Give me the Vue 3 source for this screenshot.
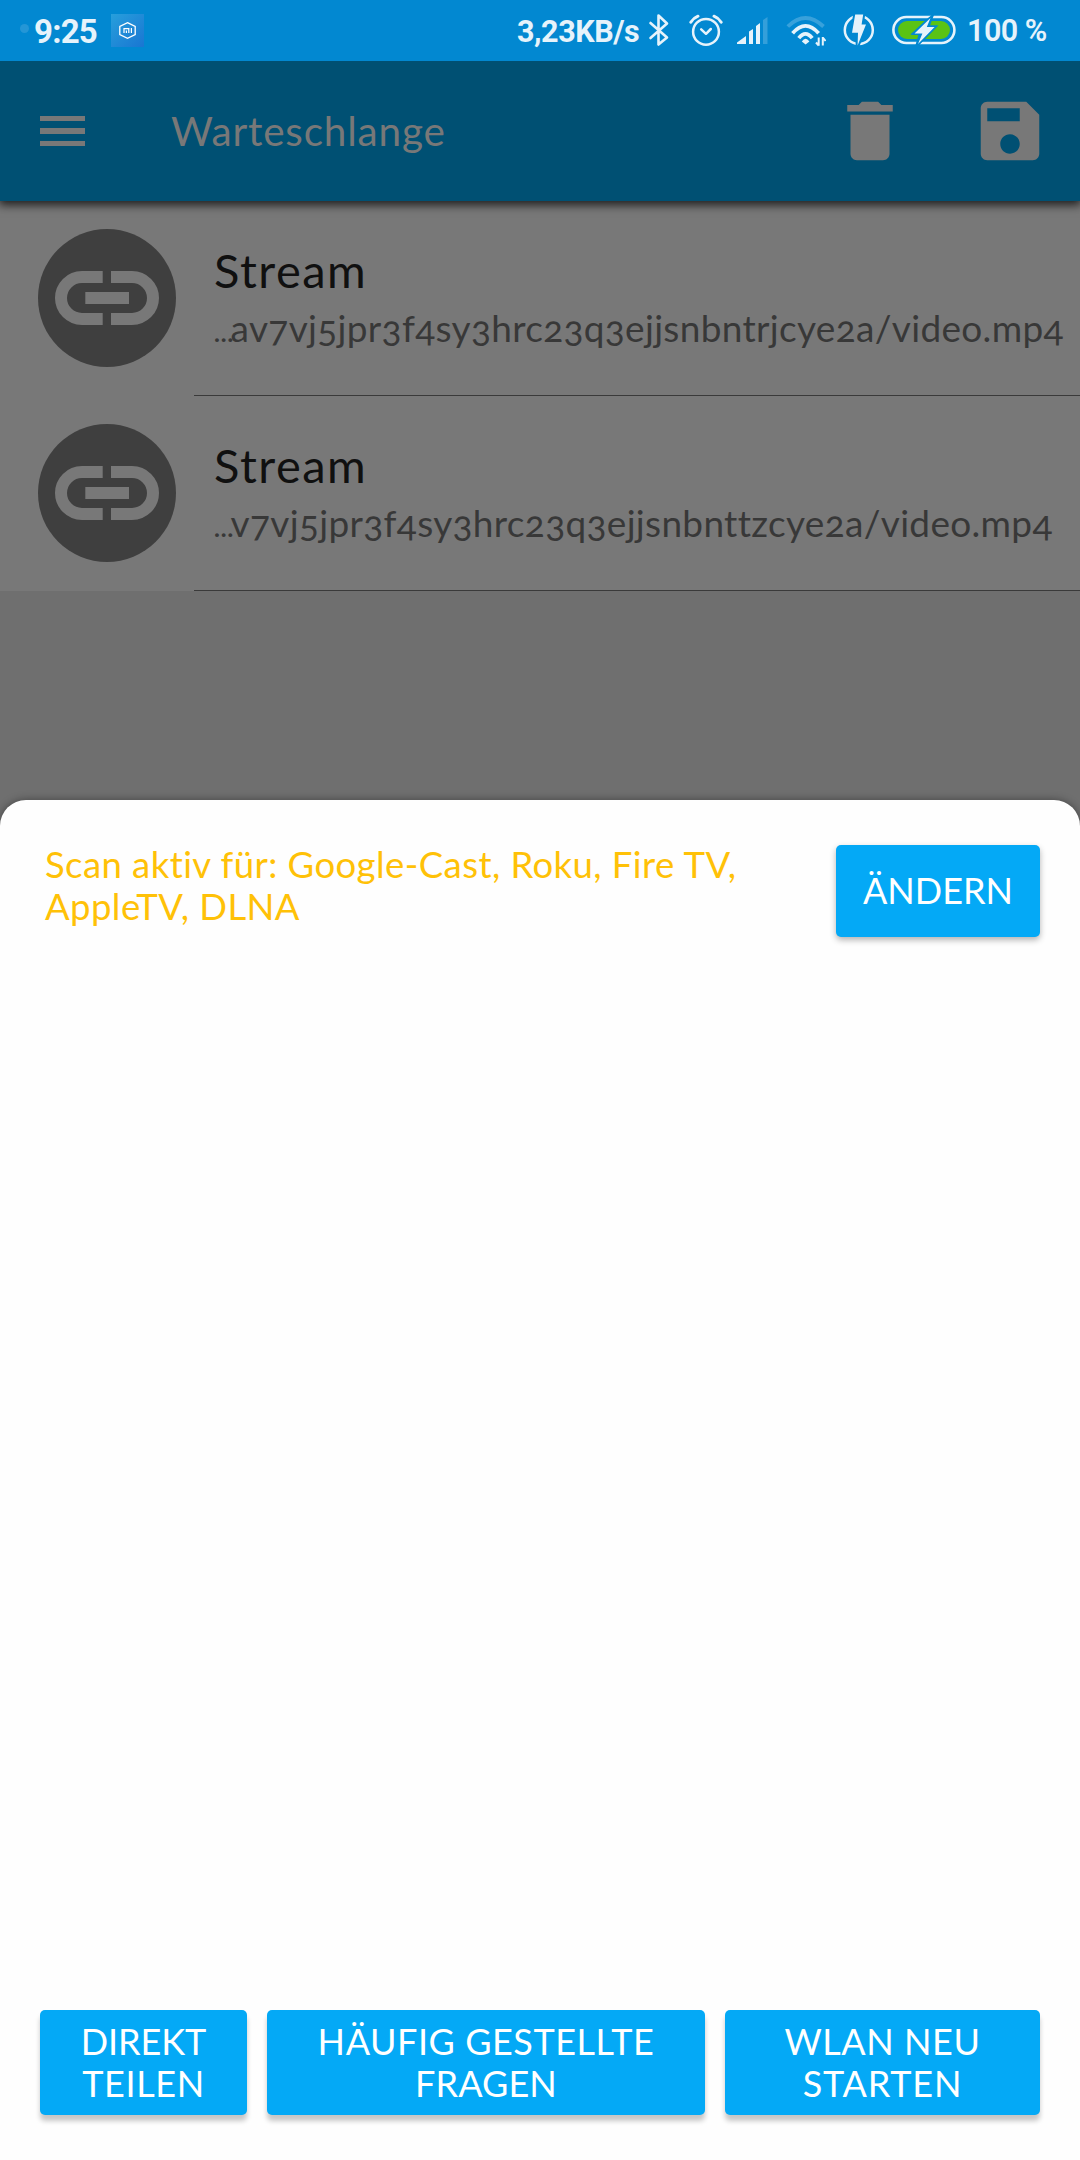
<script setup>
const queue = [
  { title: 'Stream', url: 'av7vj5jpr3f4sy3hrc23q3ejjsnbntrjcye2a/video.mp4' },
  { title: 'Stream', url: 'v7vj5jpr3f4sy3hrc23q3ejjsnbnttzcye2a/video.mp4' },
]
const actions = [
  { key: 'share', lines: ['DIREKT', 'TEILEN'] },
  { key: 'faq', lines: ['HÄUFIG GESTELLTE', 'FRAGEN'] },
  { key: 'restart', lines: ['WLAN NEU', 'STARTEN'] },
]
</script>

<template>
  <div class="screen">
    <div class="status">
      <i class="dot"></i>
      <span class="clock">9:25</span>
      <svg class="mi" width="33" height="33" viewBox="0 0 33 33">
        <defs>
          <linearGradient id="mi-bg" x1="0" y1="0" x2="1" y2="1">
            <stop offset="0" stop-color="#279fdc" />
            <stop offset="1" stop-color="#1976d2" />
          </linearGradient>
        </defs>
        <rect width="33" height="33" fill="url(#mi-bg)" />
        <path d="M16.5 8.6 24.2 12.4V20.6L16.5 24.4 8.8 20.6V12.4Z" fill="none" stroke="#fff" stroke-width="1.3" />
        <path d="M13 19V14.7H17.8V19M15.4 16.4V19M20.4 14V19" fill="none" stroke="#fff" stroke-width="1.2" />
      </svg>
      <span class="speed">3,23KB/s</span>
      <svg class="bt" width="22" height="34" viewBox="648 13 22 34" fill="none" stroke="#e6f3fb" stroke-width="2.6" stroke-linejoin="round" stroke-linecap="round">
        <path d="M650.5 23 667 37.5 658.5 44.5V15.5L667 23.5 650.5 38" />
      </svg>
      <svg class="alarm" width="34" height="34" viewBox="689 13 34 34" fill="none" stroke="#e6f3fb" stroke-linecap="round">
        <circle cx="706" cy="31.8" r="12.9" stroke-width="2.5" />
        <path d="M690.8 22.2Q693.5 18 698 16.2M714 16.2Q718.5 18 721.2 22.2" stroke-width="3" />
        <path d="M701.2 29.4 706 33.8 710.8 29" stroke-width="2.5" stroke-linejoin="round" />
      </svg>
      <svg class="signal" width="32" height="28" viewBox="737 17 32 28" fill="#e6f3fb">
        <path d="M737 44V42.5L746 36V44ZM749 44V31.5L753 29V44ZM756 44V26L760 23V44Z" />
        <path d="M763 44V20L767.5 17V44Z" opacity=".22" />
      </svg>
      <svg class="wifi" width="40" height="32" viewBox="786 15 40 32" fill="none" stroke="#e6f3fb" stroke-width="3.8">
        <path d="M787.8 26.5Q805.5 9.5 823.5 26.5" opacity=".24" />
        <path d="M792.6 33.2Q805.5 18.5 818.6 33.2M798.8 38.2Q805.5 29.6 812.2 38.2" />
        <path d="M801.8 41.5Q805.5 36 809.4 41.5L805.6 44.5Z" fill="#e6f3fb" stroke="none" />
        <path d="M818.7 45.8V37.5M816 42.5 818.7 45.5M822.8 37V45.5M822.8 37.5 825.6 41" stroke-width="2" />
      </svg>
      <svg class="charge" width="32" height="32" viewBox="843 14 32 32">
        <circle cx="858.8" cy="30" r="14" fill="none" stroke="#e6f3fb" stroke-width="2.5" />
        <path d="M855.2 14.5H863.2L861.6 24.5H866L857.6 45.5 858 32.8H852Z" fill="#e6f3fb" stroke="#0288d1" stroke-width="4" paint-order="stroke" />
      </svg>
      <svg class="battery" width="64" height="30" viewBox="892 15 64 30">
        <rect x="893.4" y="17" width="61" height="26" rx="13" fill="none" stroke="#e6f3fb" stroke-width="2.6" />
        <rect x="898" y="21" width="52" height="18" rx="9" fill="#5ac314" />
        <path d="M931.5 15 910.3 34.5H918.5L915.5 45H919L938.2 25.5H930L934 15Z" fill="#0288d1" />
        <path d="M930.5 18 914.5 33.6H922.4L918 44 934.6 27H926.8Z" fill="#e6f3fb" stroke="#0288d1" stroke-width="3" paint-order="stroke" />
      </svg>
      <span class="percent">100 %</span>
    </div>

    <header class="bar">
      <svg class="menu" width="45" height="30" viewBox="0 0 45 30" fill="#787878" shape-rendering="crispEdges">
        <path d="M0 0H45V5H0ZM0 12H45V18H0ZM0 25H45V30H0Z" />
      </svg>
      <h1>Warteschlange</h1>
      <svg class="trash" width="78" height="78" viewBox="0 0 24 24" fill="#787878">
        <path d="M6 19c0 1.1.9 2 2 2h8c1.1 0 2-.9 2-2V7H6v12zM19 4h-3.5l-1-1h-5l-1 1H5v2h14V4z" />
      </svg>
      <svg class="save" width="78" height="78" viewBox="0 0 24 24" fill="#787878">
        <path d="M17 3H5c-1.11 0-2 .9-2 2v14c0 1.1.89 2 2 2h14c1.1 0 2-.9 2-2V7l-4-4zm-5 16c-1.66 0-3-1.34-3-3s1.34-3 3-3 3 1.34 3 3-1.34 3-3 3zm3-10H5V5h10v4z" />
      </svg>
    </header>

    <ul class="queue">
      <li v-for="(item, i) in queue" :key="i">
        <svg class="link" width="138" height="138" viewBox="38 229 138 138">
          <circle cx="107" cy="298" r="69" fill="#3f3f3f" />
          <path d="M102.7 277H82a21 21 0 0 0 0 42H102.7M111 277H132a21 21 0 0 1 0 42H111M85.3 298H129" fill="none" stroke="#787878" stroke-width="12" />
        </svg>
        <div class="info">
          <div class="title">{{ item.title }}</div>
          <div class="url"><span class="more">…</span>{{ item.url }}</div>
        </div>
      </li>
    </ul>

    <section class="sheet">
      <div class="scan">
        <p>Scan aktiv für: Google-Cast, Roku, Fire TV,<br />AppleTV, DLNA</p>
        <button class="change">ÄNDERN</button>
      </div>
      <div class="actions">
        <button v-for="a in actions" :key="a.key" :class="a.key">
          <span v-for="(l, i) in a.lines" :key="l" :class="'line-' + i">{{ l }}</span>
        </button>
      </div>
    </section>
  </div>
</template>

<style>
body {
  margin: 0;
}
</style>

<style scoped>
.screen {
  width: 1080px;
  height: 2160px;
  display: flex;
  flex-direction: column;
  overflow: hidden;
  background: #6f6f6f;
  font-family: Lato, 'Liberation Sans', sans-serif;
}
.status {
  position: relative;
  z-index: 2;
  height: 61px;
  flex: none;
  display: flex;
  align-items: flex-start;
  background: #0288d1;
  color: #e6f3fb;
  font-family: Roboto, sans-serif;
  white-space: nowrap;
}
.status svg {
  flex: none;
  display: block;
}
.dot {
  width: 9px;
  height: 9px;
  margin: 24px 5px 0 20px;
  border-radius: 50%;
  background: #2496d6;
}
.clock {
  width: 77px;
  margin-top: 13px;
  font-size: 33px;
  line-height: 38px;
  font-weight: 700;
  letter-spacing: -0.8px;
}
.mi {
  margin-top: 14px;
}
.speed {
  width: 131px;
  margin: 14px 0 0 373px;
  font-size: 30.5px;
  line-height: 36px;
  font-weight: 700;
  letter-spacing: -0.45px;
}
.bt {
  margin: 13px 0 0;
}
.alarm {
  margin: 13px 0 0 19px;
}
.signal {
  margin: 17px 0 0 14px;
}
.wifi {
  margin: 15px 0 0 17px;
}
.charge {
  margin: 14px 0 0 17px;
}
.battery {
  margin: 15px 0 0 17px;
}
.percent {
  margin: 13px 0 0 11px;
  font-size: 30.5px;
  line-height: 36px;
  font-weight: 600;
  letter-spacing: -0.5px;
}
.bar {
  position: relative;
  height: 140px;
  flex: none;
  display: flex;
  align-items: center;
  background: #005073;
  box-shadow: 0 3px 9px 1px rgba(0, 0, 0, 0.75);
}
.menu {
  margin-left: 40px;
}
h1 {
  flex: 1;
  margin: 0 0 0 86px;
  padding-bottom: 1px;
  color: #787878;
  font-size: 40.5px;
  line-height: 48px;
  font-weight: 400;
  letter-spacing: 0.8px;
}
.trash {
  margin-right: 62px;
}
.save {
  margin-right: 31px;
}
.queue {
  margin: 0;
  padding: 0;
  list-style: none;
}
.queue li {
  height: 195px;
  display: flex;
  background: #787878;
}
.link {
  flex: none;
  margin: 28px 18px 0 38px;
}
.info {
  flex: 1;
  box-sizing: border-box;
  padding: 41px 0 0 20px;
  border-bottom: 1px solid #3a3a3a;
  white-space: nowrap;
}
.title {
  color: #101010;
  font-size: 47px;
  line-height: 56px;
  letter-spacing: 1.5px;
}
.url {
  height: 44px;
  margin-top: 8px;
  color: #383838;
  font-size: 37px;
  line-height: 44px;
  letter-spacing: 0.32px;
  font-variant-numeric: oldstyle-nums;
}
.more {
  margin-right: -3px;
  font-size: 25px;
  line-height: 1;
  font-weight: 700;
}
.sheet {
  flex: none;
  height: 1360px;
  margin-top: auto;
  box-sizing: border-box;
  padding: 45px 40px;
  display: flex;
  flex-direction: column;
  justify-content: space-between;
  background: #fefefe;
  border-radius: 26px 26px 0 0;
  box-shadow: 0 0 8px rgba(0, 0, 0, 0.4);
}
.scan {
  display: flex;
  justify-content: space-between;
}
p {
  margin: -2px 0 0 5px;
  color: #ffc107;
  font-size: 36.5px;
  line-height: 42px;
  letter-spacing: 0.43px;
  white-space: nowrap;
}
button {
  border: 0;
  padding: 0 0 2px;
  border-radius: 5px;
  background: #04a9f6;
  color: #fff;
  font-family: inherit;
  font-size: 36px;
  line-height: 42px;
  box-shadow: 0 3px 6px rgba(0, 0, 0, 0.3);
}
.change {
  width: 204px;
  height: 92px;
}
.actions {
  display: flex;
  gap: 20px;
}
.actions button {
  height: 105px;
  display: flex;
  flex-direction: column;
  align-items: center;
  justify-content: center;
  box-shadow: 0 6px 5px rgba(0, 0, 0, 0.22);
}
.share {
  width: 207px;
}
.faq {
  width: 438px;
}
.restart {
  width: 315px;
}
.share .line-0 {
  letter-spacing: -0.1px;
}
.share .line-1 {
  letter-spacing: 0.6px;
}
.faq .line-0,
.restart .line-0 {
  letter-spacing: 0.55px;
}
.faq .line-1 {
  letter-spacing: 0.1px;
}
.restart .line-1 {
  letter-spacing: 0.8px;
}
</style>
